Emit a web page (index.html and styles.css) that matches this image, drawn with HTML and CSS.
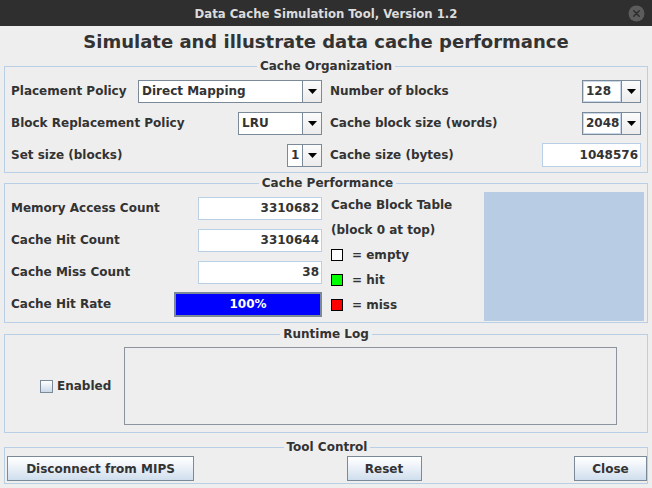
FILE: index.html
```html
<!DOCTYPE html>
<html>
<head>
<meta charset="utf-8">
<title>Data Cache Simulation Tool</title>
<link rel="stylesheet" href="styles.css">
</head>
<body>
<header class="titlebar">
  <span class="title">Data Cache Simulation Tool, Version 1.2</span>
  <span class="close">
    <svg width="17" height="17" viewBox="0 0 17 17"><circle cx="8.5" cy="8.5" r="8" fill="#5c5c5c"/><path d="M5.8 5.8 L11.2 11.2 M11.2 5.8 L5.8 11.2" stroke="#2e2e2e" stroke-width="1.6" stroke-linecap="round"/></svg>
  </span>
</header>
<main class="content">
  <h1 class="heading">Simulate and illustrate data cache performance</h1>

  <fieldset class="panel org">
    <legend>Cache Organization</legend>
    <div class="org-grid">
      <div class="col">
        <div class="row"><span class="label">Placement Policy</span>
          <div class="combo w-placement"><span class="combo-value">Direct Mapping</span><span class="combo-btn"><svg width="9" height="5" viewBox="0 0 9 5"><polygon points="0,0 9,0 4.5,5" fill="#000"/></svg></span></div>
        </div>
        <div class="row"><span class="label">Block Replacement Policy</span>
          <div class="combo w-lru"><span class="combo-value">LRU</span><span class="combo-btn"><svg width="9" height="5" viewBox="0 0 9 5"><polygon points="0,0 9,0 4.5,5" fill="#000"/></svg></span></div>
        </div>
        <div class="row"><span class="label">Set size (blocks)</span>
          <div class="combo w-set"><span class="combo-value">1</span><span class="combo-btn"><svg width="9" height="5" viewBox="0 0 9 5"><polygon points="0,0 9,0 4.5,5" fill="#000"/></svg></span></div>
        </div>
      </div>
      <div class="col">
        <div class="row"><span class="label">Number of blocks</span>
          <div class="combo w-num editable"><span class="combo-value">128</span><span class="combo-btn"><svg width="9" height="5" viewBox="0 0 9 5"><polygon points="0,0 9,0 4.5,5" fill="#000"/></svg></span></div>
        </div>
        <div class="row"><span class="label">Cache block size (words)</span>
          <div class="combo w-num editable"><span class="combo-value">2048</span><span class="combo-btn"><svg width="9" height="5" viewBox="0 0 9 5"><polygon points="0,0 9,0 4.5,5" fill="#000"/></svg></span></div>
        </div>
        <div class="row"><span class="label">Cache size (bytes)</span>
          <div class="field w-size">1048576</div>
        </div>
      </div>
    </div>
  </fieldset>

  <fieldset class="panel perf">
    <legend>Cache Performance</legend>
    <div class="perf-body">
      <div class="perf-left">
        <div class="row"><span class="label">Memory Access Count</span><div class="field w-count">3310682</div></div>
        <div class="row"><span class="label">Cache Hit Count</span><div class="field w-count">3310644</div></div>
        <div class="row"><span class="label">Cache Miss Count</span><div class="field w-count">38</div></div>
        <div class="row"><span class="label">Cache Hit Rate</span><div class="progress"><span>100%</span></div></div>
      </div>
      <div class="perf-legend">
        <div class="lg-line">Cache Block Table</div>
        <div class="lg-line">(block 0 at top)</div>
        <div class="lg-line"><span class="sq sq-empty"></span>= empty</div>
        <div class="lg-line"><span class="sq sq-hit"></span>= hit</div>
        <div class="lg-line"><span class="sq sq-miss"></span>= miss</div>
      </div>
      <div class="block-table"></div>
    </div>
  </fieldset>

  <fieldset class="panel runtime">
    <legend>Runtime Log</legend>
    <div class="runtime-body">
      <label class="enable"><span class="checkbox"></span><span>Enabled</span></label>
      <div class="log"></div>
    </div>
  </fieldset>

  <fieldset class="panel tool">
    <legend>Tool Control</legend>
    <div class="tool-body">
      <button class="btn w-disc">Disconnect from MIPS</button>
      <button class="btn w-reset">Reset</button>
      <button class="btn w-close">Close</button>
    </div>
  </fieldset>
</main>
</body>
</html>
```

FILE: styles.css
```css
* { box-sizing: border-box; }
html, body { margin: 0; padding: 0; }
body {
  width: 652px;
  height: 488px;
  overflow: hidden;
  background: #eeeeee;
  font-family: "DejaVu Sans", sans-serif;
  font-weight: bold;
  font-size: 12px;
  color: #333333;
}

.titlebar {
  height: 26px;
  background: #2f2f2f;
  display: grid;
  grid-template-columns: 1fr auto 1fr;
  align-items: center;
}
.title {
  grid-column: 2;
  color: #dcdcdc;
  font-family: "DejaVu Sans Condensed", "DejaVu Sans", sans-serif;
  font-weight: bold;
  font-size: 13px;
}
.close {
  grid-column: 3;
  justify-self: end;
  margin-right: 7px;
  display: flex;
}

.heading {
  margin: 0 0 2px;
  text-align: center;
  font-size: 18px;
  line-height: 31px;
  color: #333333;
}

.panel {
  margin: 0 4px;
  border: 1px solid #b8cfe5;
  min-width: 0;
}
.panel legend {
  margin: 0 auto;
  padding: 0 3px;
  line-height: 15px;
  color: #333333;
}

.org { padding: 1px 6px 1px; }
.org-grid {
  display: grid;
  grid-template-columns: 311px 311px;
  column-gap: 8px;
}
.row {
  height: 32px;
  display: flex;
  align-items: center;
}
.label { flex: 1; white-space: nowrap; }

.combo {
  display: flex;
  height: 23px;
  border: 1px solid #7a8a99;
  background: #ffffff;
}
.combo-value {
  flex: 1;
  padding-left: 3px;
  display: flex;
  align-items: center;
  white-space: nowrap;
}
.editable .combo-value { box-shadow: inset 0 0 0 1px #c8d8ea; }
.combo-btn {
  width: 19px;
  border-left: 1px solid #7a8a99;
  background: linear-gradient(#fbfbfb, #ececec);
  display: flex;
  align-items: center;
  justify-content: center;
}
.w-placement { width: 184px; }
.w-lru { width: 84px; }
.w-set { width: 35px; }
.w-num { width: 59px; }

.field {
  height: 24px;
  border: 1px solid #b8cfe5;
  background: #ffffff;
  display: flex;
  align-items: center;
  justify-content: flex-end;
  padding-right: 2px;
}
.w-size { width: 99px; }
.w-count { width: 124px; height: 23px; }

.perf { margin-top: 3px; padding: 1px 3px 1px 6px; }
.perf-body { display: flex; }
.perf-left { width: 311px; margin-right: 9px; }
.perf-legend { flex: 1; }
.lg-line {
  height: 25px;
  display: flex;
  align-items: center;
  white-space: nowrap;
}
.sq {
  width: 12px;
  height: 12px;
  border: 1px solid #000000;
  margin-right: 9px;
}
.sq-empty { background: #ffffff; }
.sq-hit { background: #00ff00; }
.sq-miss { background: #ff0000; }
.block-table {
  width: 160px;
  height: 129px;
  background: #b8cde4;
}

.progress {
  width: 148px;
  height: 25px;
  border: 2px solid #7a8a99;
  background: #0000ff;
  color: #ffffff;
  display: flex;
  align-items: center;
  justify-content: center;
}

.runtime { margin-top: 4px; padding: 5px 0 7px; }
.runtime-body {
  display: flex;
  align-items: center;
  padding-left: 35px;
}
.enable {
  width: 84px;
  display: flex;
  align-items: center;
  gap: 4px;
}
.checkbox {
  width: 13px;
  height: 13px;
  border: 1px solid #7a8a99;
  background: linear-gradient(#ffffff, #c9d8e8);
}
.log {
  width: 493px;
  height: 78px;
  border: 1px solid #8c959e;
  background: #eeeeee;
}

.tool { margin-top: 7px; padding: 1px 0 2px 2px; }
.tool-body {
  display: flex;
  justify-content: space-between;
}
.btn {
  height: 25px;
  padding: 0;
  border: 1px solid #7a8a99;
  background: linear-gradient(#ffffff 0%, #f1f5fa 35%, #cfdeed 100%);
  font-family: "DejaVu Sans", sans-serif;
  font-weight: bold;
  font-size: 12px;
  color: #333333;
}
.w-disc { width: 187px; }
.w-reset { width: 75px; }
.w-close { width: 73px; }
```
